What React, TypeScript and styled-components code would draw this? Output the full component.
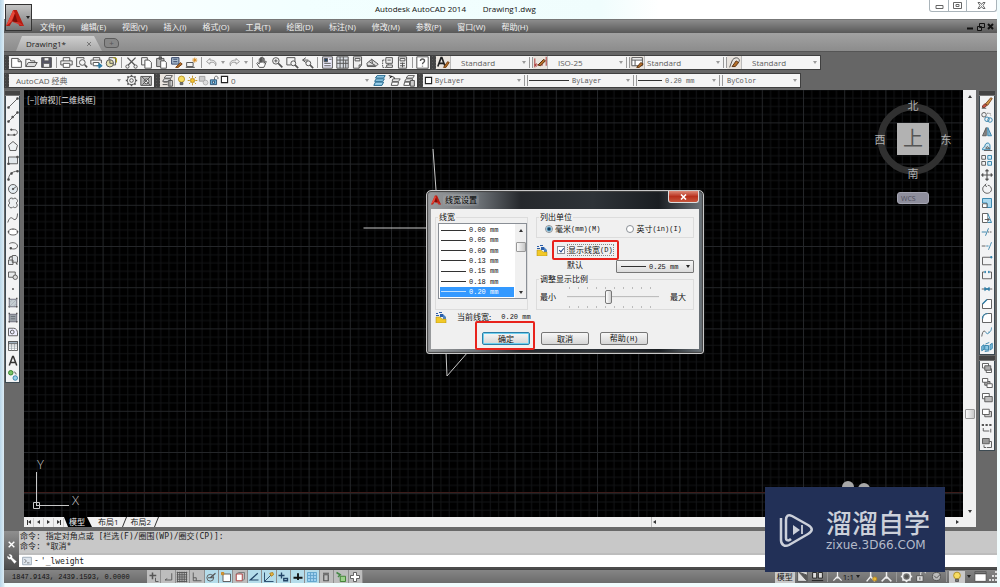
import React from 'react';
import styled, { createGlobalStyle, css } from 'styled-components';

const sans = `'Open Sans', 'Noto Sans CJK SC', sans-serif`;
const cjk = `'Noto Sans CJK SC', sans-serif`;
const mono = `'Liberation Mono', 'Noto Sans CJK SC', monospace`;

const Global = createGlobalStyle`
  * { box-sizing: border-box; }
  body { margin: 0; background: #f3fbfc; font: 8px/10px ${sans}; color: #222; }
  button, input, select { font: inherit; color: inherit; margin: 0; padding: 0; border: 0; background: none; border-radius: 0; }
  svg { display: block; flex: none; }
`;

/* ---------- icons ---------- */

const B = '#2f7fa8';
const icons: Record<string, React.ReactNode> = {
  newFile: <path d="M2 3h8l4 4v7H2zM10 3v4h4" fill="#fff" />,
  open: <><path d="M1 13V4h5l1 2h5v2" /><path d="M1 13l3-5h11l-3 5z" fill="#ddd" /></>,
  save: <><path d="M2 2h12v12H2z" fill="#556" /><path d="M5 2h6v4H5zM4 9h8v5H4z" fill="#eee" /></>,
  print: <><path d="M4 6V2h8v4M4 11H1V6h14v5h-3" /><path d="M4 9h8v5H4z" fill="#fff" /></>,
  preview: <><path d="M11 4V2H2v11h4" /><circle cx="9" cy="8" r="3.5" /><path d="M12 11l3 3" strokeWidth="2" /></>,
  publish: <><path d="M4 5V2h8v3M3 10H1V5h13v4" /><path d="M4 8h7v4H4z" fill="#fff" /><path d="M8 12h5M11 9l4 3-4 3z" stroke={B} fill={B} /></>,
  print3d: <><path d="M5 2h8v9H5z" fill="#eee" /><circle cx="6" cy="9" r="4.500" fill="#e8e3b0" /><path d="M6 5v4h4" /><path d="M10 2l4 1v5" stroke="#a90" /></>,
  cut: <><path d="M3 2l9 9M13 2l-9 9" strokeWidth="1.6" /><circle cx="3" cy="13" r="2" /><circle cx="13" cy="13" r="2" /></>,
  copy: <><path d="M2 2h7v9H2z" /><path d="M6 5h5l3 3v7H6z" fill="#fff" /></>,
  paste: <><path d="M2 3h9v10H2z" fill="#bbb" /><path d="M5 1h3v3H5z" fill="#666" /><path d="M7 6h5l2 2v7H7z" fill="#fff" /></>,
  match: <><path d="M2 2h9v8H2z" fill="#a9bccf" stroke="#346" /><path d="M4 4h5M4 7h5" stroke="#346" /><path d="M7 14l6-6 2 2-5 4z" fill="#b5702a" stroke="#7a4310" /></>,
  blockEdit: <><path d="M2 8h8v5H2zM1 14h11" /><path d="M12 2v6M9 5h6M10 3l4 4M14 3l-4 4" stroke="#d58a1d" /></>,
  undo: <path d="M6 3L2 7l4 3V8c4-1 7 0 7 4 2-5-2-7-7-7z" stroke="#999" />,
  redo: <path d="M10 3l4 4-4 3V8c-4-1-7 0-7 4-2-5 2-7 7-7z" stroke="#999" />,
  pan: <path d="M4 14l-3-5 1-1 2 2V3.500l1.500 0V8 2h1.500v6 -6.500h1.600V8 3h1.500v6l1.500-3 1 1-2 5-1 2z" fill="#fff" />,
  zoom: <><circle cx="6" cy="6" r="4" /><path d="M4 6h4M6 4v4" /><path d="M9 9l5 5" strokeWidth="2" /></>,
  zoomWin: <><path d="M1 2h10v5M1 2v9h5" /><circle cx="9" cy="9" r="3" /><path d="M11 11l4 4" strokeWidth="2" /></>,
  zoomPrev: <><path d="M6 2L2 5l4 3M2 5h7" /><circle cx="9" cy="9" r="3" /><path d="M11 11l4 4" strokeWidth="2" /></>,
  props: <><path d="M2 1h12v14H2z" fill="#eef" /><path d="M4 3h4v4H4z" fill="#246" /><path d="M10 4h3M4 9h8M4 12h8" /></>,
  center: <path d="M1 1h14v14H1zM1 5h14M1 9h14M5 1v14M9 1v14M12 5v10" fill="#d8dde3" />,
  palette: <><path d="M3 1h10v10l-3 4H3z" fill="#eee" /><path d="M5 3h6v3H5zM10 15v-4h3" /></>,
  sheet: <path d="M1 9l6-5 8 6-3 3H2zM4 7l8 5M1 12h10M7 4l1 5" fill="#ddd" />,
  markup: <><path d="M2 5h7v9H2z" strokeDasharray="2 1" /><path d="M6 2h8v7H6zM8 5h4M7 11h7v3H7z" fill="#eee" /></>,
  calc: <path d="M3 1h10v14H3zM5 3h6v3H5zM5 9h6M5 12h6M8 8v6" fill="#eee" />,
  help: <><path d="M1 1h14v14H1z" fill="#fff" /><path d="M5.500 6c0-3 5-3 5 0 0 2-2.500 2-2.500 4M8 12v1" strokeWidth="1.700" /></>,
  textStyle: <><path d="M1 13L5 2h1l4 11M3 9h6" strokeWidth="2" stroke="#222" /><path d="M8 14l5-7 2 1-4 6z" fill="#b5702a" stroke="#7a4310" /></>,
  dimStyle: <><path d="M1 3v11M15 1v11M1 11h10M3 9l-2 2 2 2" stroke="#a33" /><path d="M5 11l7-7 2 2-6 6z" fill="#b5702a" stroke="#5c3210" /></>,
  tblStyle: <><path d="M1 2h13v10H1zM1 5h13M5 5v7" fill="#fff" /><path d="M7 14l5-6 3 2-5 4z" fill="#b5702a" stroke="#5c3210" /></>,
  mlStyle: <><path d="M2 14l3-8c2-5 9-5 9 0l-2 3" /><path d="M5 13l5-7 3 2-4 5z" fill="#b5702a" stroke="#5c3210" /></>,
  gear: <><circle cx="8" cy="8" r="5" /><circle cx="8" cy="8" r="2.200" /><path d="M8 1v2M8 13v2M1 8h2M13 8h2M3 3l1.500 1.500M11.500 11.500L13 13M13 3l-1.500 1.500M4.500 11.500L3 13" strokeWidth="2" /></>,
  ws: <><path d="M1 3h13v11H1z" fill="#bbb" /><circle cx="8" cy="9" r="3" fill="#eee" /><path d="M2 3l11 11M13 3L3 13" /></>,
  layers: <><path d="M6 2h8l-2 3H4zM4 6h8l-2 3H2zM3 10h5M2 13h6" fill="#fff" /><path d="M9 8h5v7H9zM11 8v7" fill="#ddd" /></>,
  bulb: <><circle cx="8" cy="6" r="4.500" fill="#f6dc62" stroke="#b08c1c" /><path d="M6 11h4v3H6z" fill="#777" /></>,
  sun: <><circle cx="8" cy="8" r="3" fill="#f2c230" stroke="#b8860b" /><path d="M8 1v3M8 12v3M1 8h3M12 8h3M3 3l2 2M11 11l2 2M13 3l-2 2M5 11l-2 2" stroke="#b8860b" /></>,
  vp: <><path d="M2 2h8v7H2z" fill="#ccc" stroke="#999" /><circle cx="11" cy="11" r="3.500" fill="#ddd" stroke="#aaa" /></>,
  lock: <><path d="M8 7V4c0-3 5-3 5 0v2" stroke="#555" /><path d="M2 7h9v7H2z" fill="#6cb0d6" stroke="#246" /><path d="M5 9h3v3H5z" fill="#fff" stroke="#246" /></>,
  box: <path d="M2.500 2.500h11v11h-11z" fill="#fff" strokeWidth="2" stroke="#222" />,
  layA: <><path d="M5 2h10l-2 3H3z M4 6h10l-2 3H2z M3 10h10l-2 4H1z" fill="#9cd0ea" stroke="#1f678e" /></>,
  layB: <><path d="M1 2l4 1-3 2M3 3c4 0 5 1 5 3" stroke="#222" /><path d="M6 6h9l-2 3H5zM5 10h8l-1 4H4z" fill="#fff" /></>,
  layC: <><path d="M6 2h8l-2 3H4zM4 6h8l-2 3H2zM2 10h6v4H1z" fill="#fff" /><path d="M9 8h5v7H9z" fill="#ccc" /></>,
  line: <><path d="M2 14L14 2" /><path d="M1 13h2v2H1zM13 1h2v2h-2z" fill="#333" /></>,
  xline: <><path d="M2 14L14 2" /><path d="M1 13h2v2H1zM13 1h2v2h-2zM6.500 7h2v2h-2z" fill="#333" /></>,
  pline: <><path d="M2 12h8c5 0 5-7 0-7H5" /><path d="M1 11h1.500v1.500H1zM5 4h1.500v1.500H5zM9 11h1.500v1.500H9z" fill="#333" /></>,
  polygon: <path d="M8 2l6 5-2 7H4L2 7z" fill="#eef2f4" />,
  rect: <><path d="M2 4h12v9H2z" fill="#e2e8ec" /><path d="M1 12h2v2H1zM13 3h2v2h-2z" fill="#333" /></>,
  arc: <><path d="M2 14C2 8 6 3 14 3" /><path d="M1 13h2v2H1zM5 5h2v2H5zM13 2h2v2h-2z" fill="#333" /></>,
  circle: <><circle cx="8" cy="8" r="6" fill="#e4ecf1" /><path d="M8 8l4-3" /><circle cx="8" cy="8" r="1" fill="#333" /></>,
  cloud: <path d="M4 2c2-1 4-1 4 1 1-2 4-2 5 0 2 2 1 4-1 5 2 1 2 4 1 5-2 2-4 1-5 0-1 2-4 2-5 0-2-1-1-4 1-5-2-1-2-4 0-6z" fill="#edf0f2" />,
  spline: <path d="M1 14c2-6 4-8 7-5s6 0 6-7" />,
  ellipse: <><ellipse cx="8" cy="8" rx="6" ry="4" fill="#fff" /><path d="M1 7.500h2M13 7.500h2M8 3.500v1" strokeWidth="2" /></>,
  earc: <><path d="M3 5c4-3 11-1 11 3s-6 5-9 3" /><path d="M4 10h2v2H4z" fill="#333" /></>,
  insert: <><path d="M2 8h6v6H2zM7 2h5l2 2v7H7z" fill="#e3e7ea" /><path d="M3 7c0-3 2-4 4-3M12 12l2 2" strokeWidth="1.600" /></>,
  block: <><path d="M2 4h9v7H2z" fill="#e7e9ea" /><circle cx="11" cy="11" r="3" fill="#ddd" /></>,
  point: <circle cx="8" cy="8" r="0.800" fill="#333" />,
  hatch: <><path d="M3 3h10v10H3z" fill="#c4ccd2" stroke="#667" /><path d="M2 2h2M12 2h2M2 13h2M12 13h2" strokeWidth="2" /><path d="M3 8l5-5M3 13L13 3M8 13l5-5" stroke="#99a2aa" strokeWidth="0.700" /></>,
  gradient: <><path d="M3 3h10v10H3z" fill="#9aa1a8" stroke="#667" /><path d="M2 2h2M12 2h2M2 13h2M12 13h2" strokeWidth="2" /><path d="M5 6h6M5 9h6" stroke="#666e77" /></>,
  region: <><path d="M2 3h7c3 0 5 3 5 6v4H2z" fill="#eef" /><circle cx="7" cy="8" r="2.500" /></>,
  table: <><path d="M2 2h12v12H2z" fill="#fff" /><path d="M2 8h12M2 11h12M6 5v9M10 5v9" stroke="#8a939b" strokeWidth="0.800" /><path d="M2 2h12v3H2z" fill="#9fb0be" /></>,
  mtext: <path d="M3 14L7.500 2h1L13 14M5 10h6" strokeWidth="2" stroke="#333" />,
  addSel: <><circle cx="5" cy="5" r="3" fill="#7bc46a" stroke="#2c7a24" /><path d="M9 4c2 0 3 1 3 3l-1-1" /><circle cx="11" cy="12" r="3" fill="#9ed0e8" stroke={B} /></>,
  erase: <><path d="M6 9l7-8 2 1-6 9z" fill="#d0954a" stroke="#7b4a1e" /><path d="M2 12l3-3 3 2-3 3H2z" fill="#c4523e" stroke="#703022" /><path d="M1 15h6" /></>,
  copyObj: <><circle cx="4" cy="5" r="3" /><circle cx="8" cy="11" r="3" stroke={B} /><circle cx="12" cy="12" r="3" stroke={B} /><path d="M8 3h4l1 3" strokeDasharray="1 1" /></>,
  mirror: <><path d="M7 2v11H2z" fill="#888" /><path d="M9 2v11h5z" fill="#8fb8cc" stroke={B} /></>,
  offset: <><path d="M2 13c0-3 2-4 3-4 0-6 7-7 7-1v5z" stroke={B} fill="#c9e5f2" /><path d="M4 14h11M6 11h6M7 11c0-3 3-3 3 0" /></>,
  array: <><path d="M1 2h5v5H1zM1 10h5v5H1z" /><path d="M9 2h5v5H9zM9 10h5v5H9z" stroke={B} fill="#d4ebf5" /></>,
  move: <path d="M8 1v14M1 8h14M6 3l2-2 2 2M6 13l2 2 2-2M3 6L1 8l2 2M13 6l2 2-2 2" strokeWidth="1.500" />,
  rotate: <path d="M6 3C2 4 1 9 4 12s9 2 10-3c0-3-2-6-5-6M7 1L5 3l3 2" />,
  scale: <><path d="M2 2h12v12H8V8H2z" fill="#a9d8ee" stroke={B} /><path d="M2 9h6v5H2z" fill="#fff" /></>,
  stretch: <><path d="M2 2h7v12H2z" fill="#fff" /><path d="M9 2l5 12H9" stroke={B} fill="#cfe9f5" /><path d="M5 10h6M9 8l2 2-2 2" /></>,
  trim: <><path d="M1 8h6M10 3L6 13" stroke={B} /><path d="M9 8h6" strokeDasharray="2 1" /></>,
  extend: <><path d="M1 8h5" /><path d="M7 8h3M14 3l-4 10" stroke={B} strokeDasharray="3 0" /></>,
  breakPt: <><path d="M13 3H2v10h12" /><path d="M13 2h1.500v2H13z" fill={B} stroke={B} /></>,
  breakObj: <><path d="M4 4H2v9h12V4h-2" /><path d="M5 3h1v2H5zM10 3h1v2h-1z" fill={B} stroke={B} /></>,
  join: <><path d="M1 8h14" /><path d="M5 6l3 2-3 2zM11 6L8 8l3 2z" fill={B} stroke={B} /></>,
  chamfer: <><path d="M2 14V8l6-6h6v12z" fill="#fff" /><path d="M2 8l6-6" stroke={B} strokeWidth="1.600" /></>,
  fillet: <><path d="M2 14V9c0-4 3-7 7-7h5v12z" fill="#fff" /><path d="M2 9c0-4 3-7 7-7" stroke={B} strokeWidth="1.600" /></>,
  blend: <><path d="M1 14c1-7 3-9 5-6" /><path d="M6 8c2 3 4 3 5 0M10 8c2 1 4-2 4-6" stroke={B} /></>,
  explode: <><path d="M5 6h5v6H5zM1 7l3-2v6l-3 2zM12 5l3-2v7l-3 2zM6 4l5-2M5 14l6-1" stroke={B} fill="#8cc8e4" /></>,
  front: <><path d="M2 2h8v6H2zM7 9h7v5H7z" fill="#fff" /><path d="M5 5h8v6H5z" fill="#aaa" /></>,
  back: <><path d="M5 6h7v5H5z" fill="#aaa" /><path d="M2 2h7v5H2zM8 9h7v5H8z" fill="#fff" /></>,
  above: <><path d="M2 2h9v7H2z" fill="#fff" /><path d="M5 6h10v7H5z" fill="#bbb" /></>,
  under: <><path d="M5 6h9v7H5z" fill="#ccc" /><path d="M2 3h9v7H2z" fill="#fff" /></>,
  annoFront: <><path d="M1 4h3M6 4h3M11 4h3" strokeWidth="2.500" /><path d="M3 8v4h8M13 9v5" strokeWidth="1.200" /></>,
  hatchBack: <><path d="M2 2h9v7H2z" fill="#999" /><path d="M11 6h3v8H8M4 11v3h3" /></>,
  infer: <><path d="M6 2v9M2 6h9" strokeWidth="2" /><path d="M10 9v5h4" /></>,
  snap: <path d="M13 3v9H4M4 12l3-2" />,
  grid: <path d="M1 2h14M1 5h14M1 8h14M1 11h14M1 14h14M2 1v14M5 1v14M8 1v14M11 1v14M14 1v14" />,
  ortho: <path d="M3 2v11h11M3 9h4v4" />,
  polar: <><circle cx="7" cy="9" r="4.500" /><path d="M7 9l7-6M4 9h8" strokeWidth="1.600" /></>,
  osnap: <><path d="M4 4h10v10H4z" fill="#fff" /><path d="M2 2h3v3H2z" fill="#d39a38" stroke="#c88420" /></>,
  osnap3d: <><path d="M3 4h8v9H3z" fill="#fff" stroke="#a33" /><path d="M3 4l3-2h8v9l-3 2" stroke="#777" /></>,
  otrack: <path d="M13 3L3 12h11" strokeWidth="1.600" stroke="#246" />,
  ducs: <><path d="M2 2v12h12M2 14L12 4" stroke="#246" /><path d="M9 3l4-1 1 3-3 2z" fill="#e8b640" stroke="#b08020" /></>,
  dyn: <path d="M2 6h8M6 2v8M9 10h5v3H9z" strokeWidth="1.800" stroke="#246" />,
  lwt: <path d="M2 9h12M8 3v9" strokeWidth="2.500" stroke="#111" />,
  tpy: <path d="M2 2h12v12H2zM2 6h12M2 10h12M6 2v12M10 2v12" fill="#9fd0ee" stroke="#5fa3cb" />,
  qp: <path d="M4 3h8M5 5h6v8H5z" strokeWidth="1.600" />,
  sc: <><path d="M2 2l5 3-3 3" stroke="#484" strokeWidth="2" /><path d="M7 7h7v7H7z" fill="#9bd08a" stroke="#3a7d2c" /></>,
  plus: <path d="M6 2h4v4h4v4h-4v4H6v-4H2V6h4z" fill="#fff" stroke="#555" />,
  layout: <><path d="M2 2h12v12H2z" fill="#ddd" /><path d="M4 3l9 10V6z" fill="#555" /></>,
  layouts: <path d="M2 3h5v7H2zM9 3h5v7H9zM1 13h14" fill="#ddd" stroke="#222" />,
  anno: <path d="M8 1v8M8 8l-6 6M8 8l6 6M5 10h6" strokeWidth="1.800" stroke="#eee" />,
  annoVis: <><path d="M7 1v8M7 8l-5 6M7 8l5 6" strokeWidth="1.800" stroke="#eee" /><circle cx="12" cy="11" r="2.500" fill="#e9b93b" stroke="#b98b20" /></>,
  gearLight: <><circle cx="8" cy="8" r="5" stroke="#eee" strokeWidth="2" /><circle cx="8" cy="8" r="2" fill="#555" /><path d="M8 1v2M8 13v2M1 8h2M13 8h2M3 3l1.500 1.500M11.500 11.500L13 13M13 3l-1.500 1.500M4.500 11.500L3 13" stroke="#eee" strokeWidth="2" /></>,
  padlock: <><path d="M7 7V4c0-3 6-3 6 0" stroke="#eee" /><path d="M2 7h8v7H2z" fill="#ddd" /><path d="M6 9v3" /></>,
  hw: <><circle cx="8" cy="8" r="5" fill="#bbb" /><path d="M5 7l3 3 5-5" /></>,
  clean: <><path d="M1 2h14v12H1z" fill="#fff" /><path d="M1 4h14" strokeWidth="2.500" /></>,
  wrench: <path d="M3 1l3 3-2 2-3-3c-1 4 2 6 5 5l6 7 3-3-7-6c1-3-1-6-5-5z" fill="#fff" stroke="#fff" strokeWidth="0.500" />,
  cross: <path d="M3 3l10 10M13 3L3 13" strokeWidth="2.500" stroke="#fff" />,
  prompt: <><path d="M1 2h14v12H1z" fill="#dfe6ee" stroke="#8a98a8" /><path d="M4 5l3 3-3 3M8 11h4" /></>,
};

const Icon = ({ name, size = 13 }: { name: string; size?: number }) => (
  <svg width={size} height={size} viewBox="0 0 16 16" fill="none" stroke="#555" strokeWidth="1.200" aria-hidden="true">
    {icons[name]}
  </svg>
);

const Caret = styled.span<{ $dark?: boolean }>`
  flex: none;
  width: 8px;
  display: flex;
  justify-content: center;
  &::after {
    content: '';
    border: 2px solid transparent;
    border-top: 3px solid ${(p) => (p.$dark ? '#222' : '#999')};
    border-bottom: 0;
  }
`;

/* ---------- frame ---------- */

const Page = styled.div`
  position: relative;
  min-height: 100vh;
  display: flex;
  flex-direction: column;
  padding: 0 3px 4px 4px;
  background: linear-gradient(90deg, #b9d6e8 0, #dcecf5 4px, #f1fcfd 5px);
`;

const TitleBar = styled.header`
  height: 19px;
  display: flex;
  align-items: flex-start;
  background: linear-gradient(90deg, #fff 0, #f2ffff 30%, #f0fdfd 60%, #fff 66%);
`;
const Title = styled.h1`
  flex: 1;
  margin: 0;
  padding-left: 371px;
  font: 400 8px/18px ${sans};
  white-space: pre;
  color: #111;
`;
const WinButtons = styled.div`
  display: flex;
  height: 12px;
  border: 1px solid #aab4ba;
  border-top: 0;
  border-radius: 0 0 3px 3px;
`;
const WinButton = styled.button<{ $wide?: boolean }>`
  width: ${(p) => (p.$wide ? 30 : 18)}px;
  display: grid;
  place-items: center;
  & + & { border-left: 1px solid #aab4ba; }
`;

const AppButton = styled.button`
  position: absolute;
  left: 5px;
  top: 4px;
  width: 27px;
  height: 27px;
  display: flex;
  align-items: center;
  border: 1px solid #333;
  background: linear-gradient(#c4c4c4, #777);
`;

const MenuBar = styled.nav`
  height: 14px;
  display: flex;
  align-items: center;
  gap: 16px;
  padding-left: 36px;
  background: linear-gradient(#8c8c8c, #585858);
  border-top: 1px solid #777;
`;
const MenuItem = styled.button`
  color: #f2f2f2;
  line-height: 12px;
  white-space: nowrap;
`;
const DocButtons = styled.div`
  margin-left: auto;
  display: flex;
  gap: 1px;
  padding-right: 2px;
`;

const FileTabs = styled.div`
  height: 18px;
  display: flex;
  align-items: flex-end;
  gap: 2px;
  padding-left: 12px;
  background: linear-gradient(#a2a2a2, #8c8c8c);
`;
const FileTab = styled.button`
  width: 86px;
  height: 15px;
  display: flex;
  align-items: center;
  justify-content: space-between;
  padding: 0 10px;
  background: linear-gradient(#cfcfcf, #a9a9a9);
  clip-path: polygon(6px 0, 78px 0, 100% 100%, 0 100%);
`;
const NewTab = styled.button`
  width: 15px;
  height: 10px;
  margin-bottom: 3px;
  border: 1px solid #5c5c5c;
  border-radius: 2px 5px 3px 3px;
  line-height: 8px;
  color: #555;
  background: #878787;
`;

const Toolbars = styled.div`
  height: 39px;
  padding-top: 3px;
  background: #666;
  border-top: 1px solid #555;
  display: flex;
  flex-direction: column;
  gap: 3px;
`;
const ToolRow = styled.div`
  display: flex;
  height: 15px;
`;
const DarkGrip = styled.div`
  flex: none;
  width: 5px;
  background: #444 radial-gradient(#5a5a5a 1px, transparent 1px) 0 0 / 3px 3px;
`;
const Strip = styled.div`
  display: flex;
  align-items: center;
  background: #f4f4f4;
  border: 1px solid #3f3f3f;
  border-width: 1px 1px 1px 0;
`;
const IconButton = styled.button<{ $raised?: boolean }>`
  flex: none;
  width: 15px;
  height: 13px;
  display: grid;
  place-items: center;
  ${(p) => p.$raised && css`background: #e9e4de; border-right: 1px solid #bbb;`}
`;
const Sep = styled.span`
  flex: none;
  width: 1px;
  height: 11px;
  margin: 0 2px;
  background: #999;
`;
const Grip = styled.span`
  flex: none;
  width: 4px;
  height: 11px;
  border: solid #999;
  border-width: 0 1px;
`;

const Combo = styled.span<{ $w: number; $pad: number; $mono?: boolean }>`
  position: relative;
  flex: none;
  width: ${(p) => p.$w}px;
  height: 13px;
  display: flex;
  align-items: center;
  select {
    appearance: none;
    width: 100%;
    height: 13px;
    padding-left: ${(p) => p.$pad}px;
    color: #5d5d5d;
    ${(p) => p.$mono && css`font: 7px/10px ${mono};`}
  }
  ${Caret} { position: absolute; right: 1px; pointer-events: none; }
`;
const Prefix = styled.span`
  position: absolute;
  left: 1px;
  display: flex;
  pointer-events: none;
`;
const Rule = styled.span<{ $w: number }>`
  width: ${(p) => p.$w}px;
  border-top: 1px solid #333;
`;

const ComboBox = ({ label, value, w, pad, mono: m, prefix }: {
  label: string; value: string; w: number; pad: number; mono?: boolean; prefix?: React.ReactNode;
}) => (
  <Combo $w={w} $pad={pad} $mono={m}>
    {prefix && <Prefix>{prefix}</Prefix>}
    <select aria-label={label}><option>{value}</option></select>
    <Caret />
  </Combo>
);

/* ---------- work area ---------- */

const Work = styled.main`
  flex: 1;
  display: grid;
  grid-template-columns: 20px minmax(0, 1fr) 21px;
  background: #696969;
  padding-bottom: 4px;
`;
const Rail = styled.aside<{ $right?: boolean }>`
  padding: 1px ${(p) => (p.$right ? '2px 0 3px' : '4px 0 1px')};
  display: flex;
  flex-direction: column;
`;
const RailGrip = styled.div`
  height: 5px;
  background: #444;
  border-bottom: 1px solid #777;
`;
const RailPanel = styled.div<{ $h: number }>`
  height: ${(p) => p.$h}px;
  display: grid;
  grid-auto-rows: 1fr;
  justify-items: center;
  background: #f2f3f4;
  border: 1px solid #3c4a52;
  border-width: 0 1px 1px 1px;
  margin-bottom: 1px;
`;
const RailButton = styled.button`
  width: 100%;
  display: grid;
  place-items: center;
`;
const Center = styled.section`
  display: grid;
  grid-template-columns: minmax(0, 1fr) 13px;
  grid-template-rows: minmax(0, 1fr) 10px;
`;
const Canvas = styled.div`
  position: relative;
  background: #000;
  overflow: hidden;
`;
const ViewLabel = styled.div`
  position: absolute;
  left: 3px;
  top: 5px;
  font: 8px/10px ${cjk};
  color: #e4e4e4;
  white-space: nowrap;
`;
const Drawing = styled.svg`
  width: 100%;
  height: 100%;
  position: absolute;
`;
const CubeSvg = styled.svg`
  position: absolute;
  right: 8px;
  top: 7px;
`;
const Wcs = styled.button`
  position: absolute;
  right: 34px;
  top: 102px;
  width: 32px;
  height: 12px;
  border-radius: 3px;
  background: #8e8e9c;
  border: 1px solid #a5a5b2;
  color: #4e4e5c;
  font: 7px/9px ${sans};
  text-align: left;
  padding-left: 3px;
`;
const VScroll = styled.div`
  background: #f1f1f1;
  display: flex;
  flex-direction: column;
  align-items: center;
  padding: 5px 0 4px;
`;
const Arrow = styled.i<{ $dir: 'up' | 'down' | 'left' | 'right' }>`
  flex: none;
  border: 2px solid transparent;
  ${(p) => p.$dir === 'up' && css`border-top: 0; border-bottom: 3px solid #333;`}
  ${(p) => p.$dir === 'down' && css`border-bottom: 0; border-top: 3px solid #333;`}
  ${(p) => p.$dir === 'left' && css`border-left: 0; border-right: 3px solid #333;`}
  ${(p) => p.$dir === 'right' && css`border-right: 0; border-left: 3px solid #333;`}
`;
const Thumb = styled.div`
  flex: none;
  width: 10px;
  height: 10px;
  background: linear-gradient(90deg, #fafafa, #c8c8c8);
  border: 1px solid #999;
  border-radius: 1px;
`;
const Grow = styled.span<{ $n: number }>`
  flex: ${(p) => p.$n} 1 0;
`;
const BottomBar = styled.div`
  grid-column: 1 / -1;
  display: flex;
  align-items: center;
  background: #f0f0f0;
`;
const NavButton = styled.button<{ $end?: 'first' | 'last' }>`
  width: 10px;
  height: 9px;
  display: flex;
  align-items: center;
  justify-content: center;
  border-right: 1px solid #ccc;
  ${(p) => p.$end === 'first' && css`&::before { content: ''; height: 5px; border-left: 1px solid #333; }`}
  ${(p) => p.$end === 'last' && css`&::after { content: ''; height: 5px; border-left: 1px solid #333; }`}
`;
const SheetTab = styled.button<{ $on?: boolean }>`
  position: relative;
  height: 10px;
  padding: 0 6px;
  line-height: 10px;
  white-space: nowrap;
  ${(p) => p.$on
    ? css`background: #000; color: #eee; clip-path: polygon(0 0, 23px 0, 100% 100%, 4px 100%); padding: 0 7px 0 5px;`
    : css`&::after { content: ''; position: absolute; right: 0; top: 0; height: 10px; border-right: 1px solid #333; transform: skewX(-22deg); }`}
`;
const HScroll = styled.div`
  width: 325px;
  height: 10px;
  margin-left: auto;
  display: flex;
  align-items: center;
  justify-content: space-between;
  padding: 0 17px 0 1px;
  border-left: 1px solid #bbb;
`;

/* ---------- command line and status ---------- */

const Command = styled.section`
  display: grid;
  grid-template-columns: 15px minmax(0, 1fr);
  height: 38px;
  font: 8px/10px 'DejaVu Sans Mono', 'Noto Sans CJK SC', monospace;
`;
const CommandSide = styled.div`
  background: linear-gradient(#8f8f8f, #4c4c4c);
  display: flex;
  flex-direction: column;
  align-items: center;
  gap: 5px;
  padding-top: 9px;
  grid-row: 1 / 3;
`;
const History = styled.div`
  height: 24px;
  background: #c8c8c8;
  border-bottom: 2px solid #bdbdbd;
  padding: 1px 1px 0;
  white-space: nowrap;
  overflow: hidden;
`;
const Entry = styled.label`
  height: 14px;
  background: #fff;
  border-bottom: 2px solid #4c4c4c;
  display: flex;
  align-items: center;
  gap: 2px;
  padding-left: 3px;
  input { flex: 1; outline: 0; height: 12px; }
`;

const StatusBar = styled.footer`
  height: 14px;
  display: flex;
  align-items: center;
  background: linear-gradient(#858585, #6b6b6b);
  border-top: 1px solid #444;
`;
const Coords = styled.output`
  width: 143px;
  padding-left: 8px;
  font: 7px/12px ${mono};
  color: #111;
`;
const Toggles = styled.div`
  width: 216px;
  display: grid;
  grid-auto-flow: column;
  grid-auto-columns: 1fr;
`;
const Toggle = styled.button<{ $on?: boolean }>`
  height: 13px;
  display: grid;
  place-items: center;
  background: ${(p) => (p.$on ? '#b4dcea' : '#bdbdbd')};
  border-right: 1px solid #8f8f8f;
`;
const StatusRight = styled.div`
  margin-left: auto;
  display: flex;
  align-items: center;
  color: #111;
  white-space: nowrap;
`;
const StatusText = styled.button<{ $box?: boolean }>`
  height: 12px;
  padding: 0 2px;
  display: flex;
  align-items: center;
  ${(p) => p.$box && css`background: #c9c9c9;`}
`;

/* ---------- dialog ---------- */

const Dialog = styled.section`
  position: absolute;
  left: 426px;
  top: 190px;
  width: 278px;
  padding: 0 4px 4px;
  border: 1px solid #c9c9c9;
  border-radius: 5px 5px 3px 3px;
  background: linear-gradient(90deg, #9a9c9e 0, #70757a 18%, #25282c 34%, #2e3338 60%, #1a1e22 84%, #6e767c 100%);
  box-shadow: inset 0 0 1px 1px #444;
`;
const DialogTitle = styled.div`
  height: 18px;
  display: flex;
  align-items: center;
  gap: 2px;
  h2 {
    margin: 0;
    padding: 0 2px;
    font: 400 8px/12px ${cjk};
    color: #000;
    background: radial-gradient(#c4c6c8aa, #a0a2a400);
  }
`;
const CloseButton = styled.button`
  align-self: flex-start;
  margin-left: auto;
  width: 31px;
  height: 12px;
  display: grid;
  place-items: center;
  border: 1px solid #ddd;
  border-top: 0;
  border-radius: 0 0 3px 3px;
  background: linear-gradient(#dd8a78, #b8301c 50%, #c7563c);
`;
const DialogBody = styled.form`
  background: #f0f0f0;
  color: #111;
  padding: 3px 5px 4px 4px;
  font: 8px/10px ${cjk};
  white-space: nowrap;
`;
const Columns = styled.div`
  display: flex;
  gap: 8px;
`;
const Group = styled.fieldset<{ $w?: number }>`
  margin: 0;
  min-width: 0;
  ${(p) => p.$w && css`width: ${p.$w}px;`}
  border: 1px solid #dcdcdc;
  padding: 1px 0 0 2px;
  legend { padding: 0 1px; line-height: 10px; }
`;
const Latin = styled.span`
  font: 7px/10px ${mono};
`;
const ListBox = styled.ul`
  position: relative;
  height: 76px;
  margin: 0 0 10px;
  padding: 1px 12px 1px 1px;
  border: 1px solid #8a8f96;
  background: #fff;
  list-style: none;
  display: grid;
  grid-auto-rows: 1fr;
  font: 7px/10px ${mono};
`;
const ListItem = styled.li<{ $on?: boolean }>`
  display: flex;
  align-items: center;
  gap: 3px;
  padding-left: 1px;
  ${(p) => p.$on && css`background: #3399ff; color: #fff; ${Rule} { border-color: #bfe0ff; }`}
`;
const ListScroll = styled.div`
  position: absolute;
  right: 0;
  top: 0;
  bottom: 0;
  width: 11px;
  background: #f0f0f0;
  display: flex;
  flex-direction: column;
  align-items: center;
  padding: 5px 0 4px;
`;
const RightCol = styled.div`
  flex: 1;
  min-width: 0;
`;
const Radios = styled.div`
  display: flex;
  gap: 26px;
  height: 14px;
  padding: 0 0 2px 6px;
  align-items: center;
  label { display: flex; align-items: center; }
`;
const Radio = styled.input`
  appearance: none;
  width: 8px;
  height: 8px;
  margin-right: 2px;
  border: 1px solid #8a8f96;
  border-radius: 50%;
  background: #fff;
  &:checked { background: radial-gradient(#1c3f5c 0 1px, #5fa8d0 2px, #e5f2f8 3px); }
`;
const ShowRow = styled.div`
  display: flex;
  align-items: center;
  height: 22px;
  padding-top: 1px;
  gap: 8px;
`;
const Marked = styled.span<{ $kind: 'check' | 'button' }>`
  position: relative;
  display: flex;
  &::after {
    content: '';
    position: absolute;
    inset: ${(p) => (p.$kind === 'check' ? '-4px -5px -4px -4px' : '-11px -5px -5px -7px')};
    border: 2px solid #e8231c;
    border-radius: 2px;
    pointer-events: none;
  }
`;
const CheckLabel = styled.label`
  display: flex;
  align-items: center;
  gap: 2px;
  height: 12px;
  padding-left: 1px;
`;
const FocusText = styled.span`
  display: flex;
  align-items: center;
  border: 1px dotted #888;
  line-height: 10px;
`;
const Check = styled.input`
  appearance: none;
  width: 8px;
  height: 8px;
  border: 1px solid #8a8f96;
  background: #fff;
  display: grid;
  place-items: center;
  &:checked::after {
    content: '';
    width: 2px;
    height: 4px;
    border: solid #234b8c;
    border-width: 0 1px 1px 0;
    transform: rotate(40deg);
  }
`;
const DefaultRow = styled.label`
  display: flex;
  justify-content: space-between;
  height: 14px;
  padding-left: 31px;
`;
const WeightSelect = styled(Combo)`
  border: 1px solid #777;
  border-radius: 1px;
  background: linear-gradient(#f6f6f6, #dcdcdc);
  select { color: #111; }
  ${Prefix} { left: 4px; }
`;
const ScaleRow = styled.div`
  display: flex;
  align-items: center;
  justify-content: space-between;
  height: 24px;
  padding: 0 7px 0 1px;
`;
const SliderBox = styled.div`
  width: 92px;
  display: grid;
  gap: 1px;
`;
const Ticks = styled.div`
  height: 2px;
  margin: 0 2px;
  background: repeating-linear-gradient(90deg, #bbb 0 1px, transparent 1px 9px);
`;
const Slider = styled.input`
  appearance: none;
  width: 100%;
  height: 15px;
  background: linear-gradient(#a8a8a8, #fff) center / 100% 2px no-repeat;
  &::-webkit-slider-thumb {
    appearance: none;
    width: 7px;
    height: 14px;
    border: 1px solid #777;
    border-radius: 2px;
    background: linear-gradient(90deg, #fff, #cfcfcf);
  }
`;
const Current = styled.p`
  margin: 0;
  height: 14px;
  display: flex;
  align-items: center;
  gap: 10px;
`;
const Footer = styled.div`
  display: flex;
  gap: 11px;
  padding: 8px 0 0 47px;
`;
const DialogButton = styled.button<{ $primary?: boolean }>`
  width: 48px;
  height: 13px;
  border: 1px solid ${(p) => (p.$primary ? '#2c7fa8' : '#777')};
  border-radius: 2px;
  background: linear-gradient(#f7f7f7, #d6d6d6);
  ${(p) => p.$primary && css`box-shadow: inset 0 0 0 1px #6fd0f0;`}
`;

/* ---------- site badge ---------- */

const Badge = styled.a`
  position: absolute;
  right: 55px;
  bottom: 15px;
  width: 180px;
  height: 85px;
  display: flex;
  align-items: center;
  gap: 12px;
  padding-left: 14px;
  background: #223057;
  color: #ccd0da;
  text-decoration: none;
`;
const BadgeText = styled.span`
  display: grid;
  gap: 2px;
  strong { font: 500 26px/28px ${cjk}; }
  small { font: 12px/14px 'DejaVu Sans', sans-serif; color: #b4bac9; }
`;

const AutoCadMark = ({ size }: { size: number }) => (
  <svg width={size} height={size} viewBox="0 0 20 20" aria-hidden="true">
    <path d="M8 1h4l8 18h-5l-2-4-6-1-3 5H0z" fill="#b71c12" />
    <path d="M8 1L0 19l6-5 4-9z" fill="#e8483a" />
    <path d="M10 5l3 10-6-1z" fill="#7d0e08" />
    <path d="M6 14l9 1 5 4-6-2z" fill="#d2332a" />
  </svg>
);

const WeightIcon = () => (
  <svg width="12" height="12" viewBox="0 0 12 12" aria-hidden="true">
    <path d="M1 2h2v1H1zM4 1h3v1H4zM1 4h3v1H1zM5 3h3v3H5z" fill="#2b5da8" />
    <path d="M8 3l3 3v3H8z" fill="#4d84c4" />
    <path d="M1 6h4l2 2h4v4H1z" fill="#f2c928" stroke="#a98a10" strokeWidth="0.500" />
  </svg>
);

const menus = ['文件(F)', '编辑(E)', '视图(V)', '插入(I)', '格式(O)', '工具(T)', '绘图(D)', '标注(N)', '修改(M)', '参数(P)', '窗口(W)', '帮助(H)'];
const standard = ['newFile', 'open', 'save', '|', 'print', 'preview', 'publish', 'print3d', '|', 'cut', 'copy', 'paste', 'match', 'blockEdit', '|', 'undo', 'v', 'redo', 'v', '|', 'pan', 'zoom', 'zoomWin', 'zoomPrev', '|', 'props', 'center', 'palette', 'sheet', 'markup', 'calc', '|', 'help'];
const draw = ['line', 'xline', 'pline', 'polygon', 'rect', 'arc', 'circle', 'cloud', 'spline', 'ellipse', 'earc', 'insert', 'block', 'point', 'hatch', 'gradient', 'region', 'table', 'mtext', 'addSel'];
const modify = ['erase', 'copyObj', 'mirror', 'offset', 'array', 'move', 'rotate', 'scale', 'stretch', 'trim', 'extend', 'breakPt', 'breakObj', 'join', 'chamfer', 'fillet', 'blend', 'explode'];
const order = ['front', 'back', 'above', 'under', 'annoFront', 'hatchBack'];
const toggles: [string, boolean][] = [['infer', false], ['snap', false], ['grid', false], ['ortho', false], ['polar', true], ['osnap', true], ['osnap3d', false], ['otrack', true], ['ducs', true], ['dyn', true], ['lwt', true], ['tpy', true], ['qp', false], ['sc', false], ['plus', false]];
const styles = [
  { icon: 'textStyle', value: 'Standard', pad: 10 },
  { icon: 'dimStyle', value: 'ISO-25', pad: 10 },
  { icon: 'tblStyle', value: 'Standard', pad: 2 },
  { icon: 'mlStyle', value: 'Standard', pad: 10 },
];
const weights = ['0.00', '0.05', '0.09', '0.13', '0.15', '0.18', '0.20'];

const Tools = ({ names }: { names: string[] }) => (
  <>
    {names.map((n, i) =>
      n === '|' ? <Sep key={i} /> : n === 'v' ? <Caret key={i} /> : (
        <IconButton key={i} type="button" aria-label={n}><Icon name={n} /></IconButton>
      ))}
  </>
);

const RailTools = ({ names, h }: { names: string[]; h: number }) => (
  <RailPanel $h={h}>
    {names.map((n) => <RailButton key={n} type="button" aria-label={n}><Icon name={n} size={12} /></RailButton>)}
  </RailPanel>
);

const ModelSpace = () => (
  <Canvas>
    <Drawing aria-hidden="true">
      <defs>
        <pattern id="grid" x="-3.800" y="-8.800" width="41.200" height="41.200" patternUnits="userSpaceOnUse">
          <path d="M8.740 0v41.200M16.980 0v41.200M25.220 0v41.200M33.460 0v41.200M0 8.740h41.200M0 16.980h41.200M0 25.220h41.200M0 33.460h41.200" stroke="#121315" />
          <path d="M.500 0v41.200M0 .500h41.200" stroke="#242629" />
        </pattern>
      </defs>
      <rect width="100%" height="100%" fill="url(#grid)" />
      <path d="M0 402.500h2000" stroke="#3c1c1a" />
      <g stroke="#c8c8c8" fill="none">
        <path d="M409 59l3 41M339.500 138H403M422 262l1 24 21-24" />
        <path d="M12.500 382v33M12 415.500h33M9.500 412.500h6v6h-6z" />
      </g>
      <g fill="#c8c8c8" fontFamily="Open Sans" fontWeight="300" fontSize="13">
        <text x="13" y="379">Y</text>
        <text x="48" y="415">X</text>
      </g>
      <g fill="#a8a8a8"><circle cx="824" cy="397" r="6" /><circle cx="840" cy="399" r="6" /></g>
    </Drawing>
    <ViewLabel>[−][俯视][二维线框]</ViewLabel>
    <CubeSvg width="84" height="84" viewBox="0 0 84 84">
      <circle cx="42" cy="42" r="32" fill="none" stroke="#303030" strokeWidth="7" />
      <path d="M26 26h32v32H26z" fill="#b2b2b2" />
      <g fill="#b0b0b0" fontFamily="Noto Sans CJK SC" fontSize="11" textAnchor="middle">
        <text x="42" y="13">北</text>
        <text x="9" y="47">西</text>
        <text x="75" y="47">东</text>
        <text x="42" y="81">南</text>
        <text x="42" y="49" fontSize="20" fill="#555">上</text>
      </g>
    </CubeSvg>
    <Wcs type="button">WCS</Wcs>
  </Canvas>
);

const LineweightDialog = () => (
  <Dialog role="dialog" aria-labelledby="dlg-title">
    <DialogTitle>
      <AutoCadMark size={10} />
      <h2 id="dlg-title">线宽设置</h2>
      <CloseButton type="button" aria-label="关闭">
        <svg width="7" height="6" viewBox="0 0 7 6"><path d="M1 .500l5 5M6 .500l-5 5" stroke="#fff" strokeWidth="1.600" /></svg>
      </CloseButton>
    </DialogTitle>
    <DialogBody onSubmit={(e) => e.preventDefault()}>
      <Columns>
        <Group $w={93}>
          <legend>线宽</legend>
          <ListBox role="listbox" aria-label="线宽">
            {weights.map((w) => (
              <ListItem key={w} role="option" aria-selected={w === '0.20'} $on={w === '0.20'}>
                <Rule $w={25} />{w} mm
              </ListItem>
            ))}
            <ListScroll aria-hidden="true">
              <Arrow $dir="up" /><Grow $n={1} /><Thumb /><Grow $n={4} /><Arrow $dir="down" />
            </ListScroll>
          </ListBox>
        </Group>
        <RightCol>
          <Group>
            <legend>列出单位</legend>
            <Radios>
              <label><Radio type="radio" name="unit" defaultChecked />毫米<Latin>(mm)(M)</Latin></label>
              <label><Radio type="radio" name="unit" />英寸<Latin>(in)(I)</Latin></label>
            </Radios>
          </Group>
          <ShowRow>
            <WeightIcon />
            <Marked $kind="check">
              <CheckLabel><Check type="checkbox" defaultChecked /><FocusText>显示线宽<Latin>(D)</Latin></FocusText></CheckLabel>
            </Marked>
          </ShowRow>
          <DefaultRow>
            默认
            <WeightSelect $w={78} $pad={32} $mono>
              <Prefix><Rule $w={25} /></Prefix>
              <select><option>0.25 mm</option></select>
              <Caret $dark />
            </WeightSelect>
          </DefaultRow>
          <Group>
            <legend>调整显示比例</legend>
            <ScaleRow>
              最小
              <SliderBox>
                <Ticks />
                <Slider type="range" aria-label="调整显示比例" min={0} max={9} defaultValue={4} />
                <Ticks />
              </SliderBox>
              最大
            </ScaleRow>
          </Group>
        </RightCol>
      </Columns>
      <Current><WeightIcon />当前线宽:<Latin>0.20 mm</Latin></Current>
      <Footer>
        <Marked $kind="button"><DialogButton $primary type="submit">确定</DialogButton></Marked>
        <DialogButton type="button">取消</DialogButton>
        <DialogButton type="button">帮助<Latin>(H)</Latin></DialogButton>
      </Footer>
    </DialogBody>
  </Dialog>
);

export default function App() {
  return (
    <Page>
      <Global />
      <TitleBar>
        <Title>Autodesk AutoCAD 2014{'        '}Drawing1.dwg</Title>
        <WinButtons>
          <WinButton type="button" aria-label="最小化"><svg width="9" height="9"><path d="M1 4.500h7v3H1z" fill="#fff" stroke="#666" /></svg></WinButton>
          <WinButton type="button" aria-label="最大化"><svg width="9" height="9"><path d="M.500 1.500h8v6h-8zM3 3.500h3v2H3z" fill="#fff" stroke="#666" /></svg></WinButton>
          <WinButton type="button" aria-label="关闭" $wide><svg width="9" height="9"><path d="M1 1.500h2l1.500 2 1.500-2h2L6 4.500l2 3H6l-1.500-2-1.500 2H1l2-3z" fill="#fff" stroke="#666" /></svg></WinButton>
        </WinButtons>
      </TitleBar>
      <MenuBar>
        {menus.map((m) => <MenuItem key={m} type="button">{m}</MenuItem>)}
        <DocButtons>
          <MenuItem type="button" aria-label="最小化文档"><svg width="9" height="9"><path d="M1 6.500h6" stroke="#111" strokeWidth="2" /></svg></MenuItem>
          <MenuItem type="button" aria-label="还原文档"><svg width="9" height="9"><path d="M3.500 1.500h5v4h-5zM1.500 4.500h4v4h-4z" fill="#777" stroke="#111" /></svg></MenuItem>
          <MenuItem type="button" aria-label="关闭文档"><svg width="9" height="9"><path d="M2 2l5 5M7 2L2 7" stroke="#111" strokeWidth="2" /></svg></MenuItem>
        </DocButtons>
      </MenuBar>
      <FileTabs>
        <FileTab type="button">Drawing1*<svg width="6" height="6"><path d="M1 1l4 4M5 1L1 5" stroke="#777" /></svg></FileTab>
        <NewTab type="button" aria-label="新图形">+</NewTab>
      </FileTabs>
      <AppButton type="button" aria-label="应用程序菜单"><AutoCadMark size={18} /><Caret $dark /></AppButton>

      <Toolbars>
        <ToolRow>
          <DarkGrip />
          <Strip><Tools names={standard} /></Strip>
          <DarkGrip />
          <Strip>
            {styles.map((s, i) => (
              <React.Fragment key={s.icon}>
                {i > 0 && <Grip />}
                <IconButton $raised type="button" aria-label={s.icon}><Icon name={s.icon} /></IconButton>
                <ComboBox label={s.icon} value={s.value} w={78} pad={s.pad} />
              </React.Fragment>
            ))}
          </Strip>
        </ToolRow>
        <ToolRow>
          <DarkGrip />
          <Strip>
            <ComboBox label="工作空间" value="AutoCAD 经典" w={115} pad={7} />
            <Tools names={['gear', 'ws']} />
          </Strip>
          <DarkGrip />
          <Strip>
            <IconButton $raised type="button" aria-label="图层特性"><Icon name="layers" /></IconButton>
            <ComboBox
              label="图层" value="0" w={197} pad={56}
              prefix={<>{['bulb', 'sun', 'vp', 'lock', 'box'].map((n) => <Icon key={n} name={n} size={n === 'box' ? 9 : 11} />)}</>}
            />
            <Tools names={['layA', 'layB', 'layC']} />
          </Strip>
          <DarkGrip />
          <Strip>
            <ComboBox label="颜色" value="ByLayer" w={101} pad={12} mono prefix={<Icon name="box" size={9} />} />
            <Grip />
            <ComboBox label="线型" value="ByLayer" w={105} pad={44} mono prefix={<Rule $w={40} />} />
            <Grip />
            <ComboBox label="线宽" value="0.20 mm" w={82} pad={28} mono prefix={<Rule $w={24} />} />
            <Grip />
            <ComboBox label="打印样式" value="ByColor" w={77} pad={4} mono />
          </Strip>
        </ToolRow>
      </Toolbars>

      <Work>
        <Rail>
          <RailGrip />
          <RailTools names={draw} h={287} />
        </Rail>
        <Center>
          <ModelSpace />
          <VScroll>
            <Arrow $dir="up" /><Grow $n={24} /><Thumb /><Grow $n={7} /><Arrow $dir="down" />
          </VScroll>
          <BottomBar>
            <NavButton type="button" aria-label="第一个" $end="first"><Arrow $dir="left" /></NavButton>
            <NavButton type="button" aria-label="上一个"><Arrow $dir="left" /></NavButton>
            <NavButton type="button" aria-label="下一个"><Arrow $dir="right" /></NavButton>
            <NavButton type="button" aria-label="最后一个" $end="last"><Arrow $dir="right" /></NavButton>
            <SheetTab $on type="button">模型</SheetTab>
            <SheetTab type="button">布局1</SheetTab>
            <SheetTab type="button">布局2</SheetTab>
            <HScroll><Arrow $dir="left" /><Arrow $dir="right" /></HScroll>
          </BottomBar>
        </Center>
        <Rail $right>
          <RailGrip />
          <RailTools names={modify} h={259} />
          <RailGrip />
          <RailTools names={order} h={90} />
        </Rail>
      </Work>

      <Command>
        <CommandSide>
          <Icon name="cross" size={9} />
          <Icon name="wrench" size={10} />
        </CommandSide>
        <History>
          <div>命令: 指定对角点或 [栏选(F)/圈围(WP)/圈交(CP)]:</div>
          <div>命令: *取消*</div>
        </History>
        <Entry><Icon name="prompt" size={10} />-<input aria-label="命令" defaultValue="'_lweight" /></Entry>
      </Command>

      <StatusBar>
        <Coords>1847.9143, 2439.1593, 0.0000</Coords>
        <Toggles>
          {toggles.map(([n, on]) => <Toggle key={n} type="button" $on={on} aria-label={n}><Icon name={n} size={12} /></Toggle>)}
        </Toggles>
        <StatusRight>
          <StatusText type="button" $box>模型</StatusText>
          <Tools names={['layout', 'layouts', '|']} />
          <StatusText type="button"><Icon name="anno" size={11} />1:1<Caret $dark /></StatusText>
          <Tools names={['annoVis', 'anno', '|', 'gearLight', 'padlock', 'hw', '|']} />
          <StatusText type="button" $box aria-label="隔离对象"><Icon name="bulb" size={12} /></StatusText>
          <Caret $dark />
          <Tools names={['clean']} />
          <svg width="9" height="11"><path d="M7 1h2M4 5h2M7 5h2M1 9h2M4 9h2M7 9h2" stroke="#ddd" strokeWidth="2" /></svg>
        </StatusRight>
      </StatusBar>

      <LineweightDialog />

      <Badge href="#">
        <svg width="35" height="36" viewBox="0 0 35 36" fill="none" stroke="#ccd0da" strokeWidth="2.500" strokeLinejoin="round" aria-hidden="true">
          <path d="M2 6v22c0 5 4 7 8 5l19-11c5-3 5-6 0-9L13 4c-4-2-6 0-6 4v18c0 3 3 3 5 1" />
          <path d="M14 13l7 5-7 5z" fill="#ccd0da" stroke="none" />
          <path d="M23 13v9" strokeWidth="1.800" />
        </svg>
        <BadgeText><strong>溜溜自学</strong><small>zixue.3D66.COM</small></BadgeText>
      </Badge>
    </Page>
  );
}
